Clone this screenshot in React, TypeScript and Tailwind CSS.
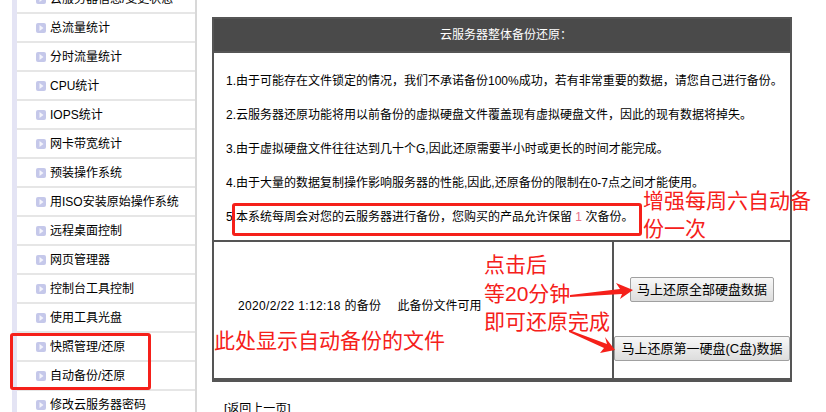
const FONT = "font-['Liberation_Sans','Noto_Sans_CJK_SC',sans-serif]";

const menuItems = [
  "云服务器信息/变更状态",
  "总流量统计",
  "分时流量统计",
  "CPU统计",
  "IOPS统计",
  "网卡带宽统计",
  "预装操作系统",
  "用ISO安装原始操作系统",
  "远程桌面控制",
  "网页管理器",
  "控制台工具控制",
  "使用工具光盘",
  "快照管理/还原",
  "自动备份/还原",
  "修改云服务器密码",
];

const notices = [
  "1.由于可能存在文件锁定的情况，我们不承诺备份100%成功，若有非常重要的数据，请您自己进行备份。",
  "2.云服务器还原功能将用以前备份的虚拟硬盘文件覆盖现有虚拟硬盘文件，因此的现有数据将掉失。",
  "3.由于虚拟硬盘文件往往达到几十个G,因此还原需要半小时或更长的时间才能完成。",
  "4.由于大量的数据复制操作影响服务器的性能,因此,还原备份的限制在0-7点之间才能使用。",
];

function MenuIcon() {
  return (
    <svg width="10" height="10" viewBox="0 0 10 10" className="shrink-0">
      <rect width="10" height="10" rx="2" fill="#c5c8ea" />
      <path d="M3.5 2 L7.5 5 L3.5 8 Z" fill="#f4f4fb" />
    </svg>
  );
}

function RestoreButton({ label }: { label: string }) {
  return (
    <button className="h-[25px] px-[6px] border border-[#a0a0a0] rounded-[2px] bg-gradient-to-b from-[#f8f8f8] to-[#dddddd] text-[13px] text-black whitespace-nowrap">
      {label}
    </button>
  );
}

export default function App() {
  return (
    <div className={`relative flex w-[826px] h-[412px] overflow-hidden bg-white text-xs text-black ${FONT}`}>
      <div className="ml-3 mr-[15px] w-[185px] h-full shrink-0 overflow-hidden border-l-[5px] border-r-2 border-l-[#e4e4f4] border-r-[#d8d8d8]">
        <div className="mt-[-15px]">
          {menuItems.map((item) => (
            <div key={item} className="flex items-center gap-1 h-[29px] pl-[19px] border-b-2 border-[#e6e6e6]">
              <MenuIcon />
              <span className="whitespace-nowrap">{item}</span>
            </div>
          ))}
        </div>
      </div>

      <div className="w-[580px] pt-[17px]">
        <div className="border-2 border-[#555555] border-b-[4px]">
          <div className="flex items-center justify-center h-[34px] pl-2 bg-[#4a4a4a] text-white border-b-2 border-[#555555]">
            云服务器整体备份还原：
          </div>
          <div className="h-[189px] pl-3 pt-[11px] border-b-2 border-[#555555]">
            {notices.map((line) => (
              <p key={line} className="h-[34px] leading-[34px] whitespace-nowrap">{line}</p>
            ))}
            <p className="h-[34px] leading-[34px] whitespace-nowrap">
              5.本系统每周会对您的云服务器进行备份，您购买的产品允许保留 <span className="text-[#e8708a]">1</span> 次备份。
            </p>
          </div>
          <div className="flex h-[136px]">
            <div className="flex items-center w-[400px] pl-6 pb-[8px] border-r-2 border-[#555555] whitespace-nowrap">
              <span className="tracking-[0.35px]">2020/2/22 1:12:18 的备份</span>
              <span className="ml-4">此备份文件可用</span>
            </div>
            <div className="flex flex-1 flex-col items-center gap-[34px] pt-[35px]">
              <RestoreButton label="马上还原全部硬盘数据" />
              <RestoreButton label="马上还原第一硬盘(C盘)数据" />
            </div>
          </div>
        </div>
        <div className="mt-[19px] pl-3">[返回上一页]</div>
      </div>

      {/* red annotations on top of the page */}
      <div className="absolute left-[10px] top-[333px] w-[141px] h-[57px] border-[3px] border-[#f5201a] rounded-[3px]" />
      <div className="absolute left-[232px] top-[203px] w-[410px] h-[33px] border-[3px] border-[#f5201a] rounded-[3px]" />
      <div className="absolute left-[214px] top-[326px] text-[21px] leading-[30px] text-[#f5201a] whitespace-nowrap">此处显示自动备份的文件</div>
      <div className="absolute left-[643px] top-[187px] w-[170px] text-[21px] leading-[28px] text-[#f5201a]">增强每周六自动备份一次</div>
      <div className="absolute left-[484px] top-[251px] text-[21px] leading-[28.5px] text-[#f5201a] whitespace-nowrap">
        <div>点击后</div>
        <div>等20分钟</div>
        <div>即可还原完成</div>
      </div>
      <svg className="absolute left-0 top-0 pointer-events-none" width="826" height="412">
        <polygon points="570,295 620,289 616,283 633,290 620,299 622,294 570,297" fill="#f5201a" />
        <polygon points="569,330 607,344 605,337 615,350 600,353 604,348 569,332" fill="#f5201a" />
      </svg>
    </div>
  );
}
